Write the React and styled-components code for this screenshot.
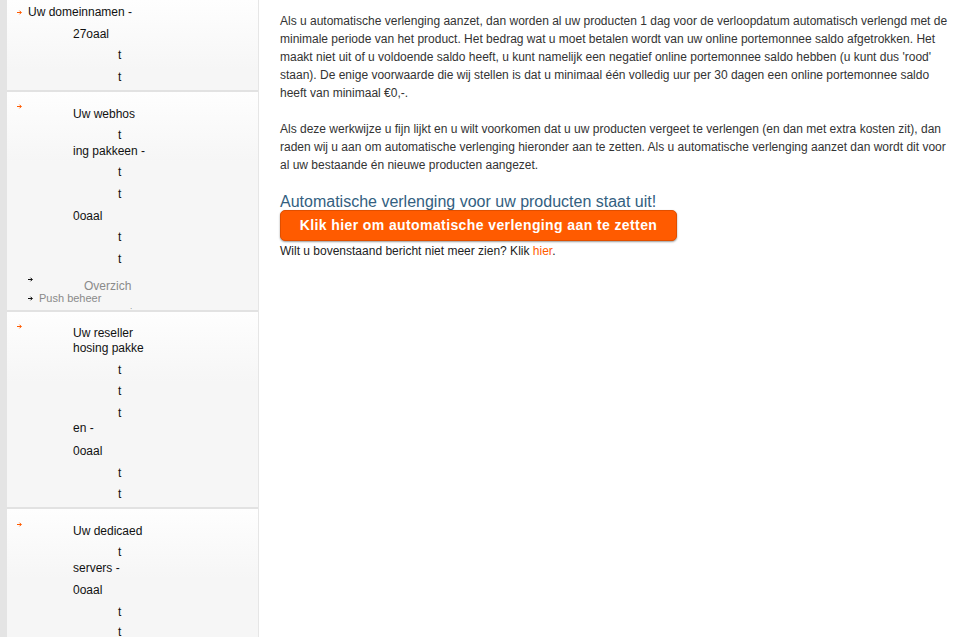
import React from "react";
import styled, { createGlobalStyle } from "styled-components";

const Global = createGlobalStyle`
  html, body { margin: 0; padding: 0; background: #fff; }
  body { font-family: "Liberation Sans", Arial, sans-serif; overflow: hidden; }
`;

const Page = styled.div`
  display: flex;
  height: 100vh;
  overflow: hidden;
`;

const Sidebar = styled.aside`
  flex: 0 0 251px;
  border-left: 7px solid #e4e4e4;
  border-right: 1px solid #e6e6e6;
  background: #f7f7f7;
  display: flex;
  flex-direction: column;
  overflow: hidden;
`;

const Section = styled.section`
  display: grid;
  grid-template-columns: 11px 1fr;
  align-items: start;
  padding: 0 0 ${(p) => p.$pb}px 10px;
  border-bottom: 2px solid #e2e2e2;
  background: linear-gradient(#fefefe, #f6f6f6 70px, #f6f6f6);
  flex: ${(p) => (p.$last ? "1 0 auto" : "0 0 auto")};
`;

const Marker = styled.svg`
  display: block;
  width: 5px;
  height: 5px;
  margin-top: ${(p) => p.$top}px;
`;

const Body = styled.div`
  display: flex;
  flex-direction: column;
`;

const Line = styled.div`
  height: 14px;
  line-height: 14px;
  font-size: 12px;
  color: #111;
  white-space: nowrap;
  margin-top: ${(p) => p.$gap}px;
  margin-left: ${(p) => p.$x - 28}px;
`;

const SubMenu = styled.div`
  display: grid;
  grid-template-columns: 11px 1fr;
  margin-top: ${(p) => p.$gap}px;
`;

const SubArrow = styled.svg`
  display: block;
  width: 5px;
  height: 5px;
  margin-top: ${(p) => p.$top}px;
`;

const SubLink = styled.div`
  font-size: ${(p) => p.$size}px;
  line-height: ${(p) => p.$lh}px;
  color: #8a8a8a;
  white-space: nowrap;
  margin-top: ${(p) => p.$top}px;
  margin-left: ${(p) => p.$x}px;
`;

const Dot = styled.div`
  height: 6px;
  margin-left: 102px;
  font-size: 8px;
  line-height: 6px;
  color: #777;
`;

const Main = styled.main`
  flex: 1 1 auto;
  padding: 12px 8px 0 21px;
  color: #333;
  font-size: 12px;
  line-height: 18px;
`;

const Para = styled.p`
  margin: 0 0 18px;
  &:last-of-type { margin-bottom: 0; }
`;

const Heading = styled.h2`
  margin: 20px 0 0;
  font-size: 16px;
  font-weight: normal;
  line-height: 16px;
  color: #33607f;
`;

const Button = styled.button`
  display: flex;
  align-items: center;
  justify-content: center;
  box-sizing: border-box;
  width: 397px;
  height: 31px;
  margin-top: 0;
  padding: 0 10px 1px;
  border: 1px solid #e04f00;
  border-radius: 5px;
  background: #ff5b00;
  box-shadow: 0 1px 2px rgba(0, 0, 0, 0.4);
  color: #fff;
  font-family: "Liberation Sans", Arial, sans-serif;
  font-weight: bold;
  font-size: 14px;
  letter-spacing: 0.4px;
  cursor: pointer;
`;

const Notice = styled.div`
  margin-top: 1px;
  color: #222;
`;

const Link = styled.a`
  color: #ff5b00;
  text-decoration: none;
`;

const OrangeArrow = ({ top }) => (
  <Marker $top={top} viewBox="0 0 5 5">
    <path d="M0 2.5H4.2M2.5 0.7L4.3 2.5L2.5 4.3" stroke="#ff5b00" strokeWidth="1" fill="none" />
  </Marker>
);

const BlackArrow = ({ top }) => (
  <SubArrow $top={top} viewBox="0 0 5 5">
    <path d="M0 2.5H4.2M2.5 0.7L4.3 2.5L2.5 4.3" stroke="#111" strokeWidth="1" fill="none" />
  </SubArrow>
);

const sections = [
  {
    marker: 10,
    pb: 6,
    lines: [
      ["Uw domeinnamen -", 28, 5],
      ["27oaal", 73, 8],
      ["t", 118, 7],
      ["t", 118, 8],
    ],
  },
  {
    marker: 12,
    pb: 0,
    sub: true,
    lines: [
      ["Uw webhos", 73, 15],
      ["t", 118, 7],
      ["ing pakkeen -", 73, 2],
      ["t", 118, 7],
      ["t", 118, 8],
      ["0oaal", 73, 8],
      ["t", 118, 7],
      ["t", 118, 8],
    ],
  },
  {
    marker: 12,
    pb: 6,
    lines: [
      ["Uw reseller", 73, 14],
      ["hosing pakke", 73, 1],
      ["t", 118, 8],
      ["t", 118, 7],
      ["t", 118, 8],
      ["en -", 73, 1],
      ["0oaal", 73, 9],
      ["t", 118, 8],
      ["t", 118, 7],
    ],
  },
  {
    marker: 13,
    pb: 0,
    last: true,
    lines: [
      ["Uw dedicaed", 73, 15],
      ["t", 118, 7],
      ["servers -", 73, 2],
      ["0oaal", 73, 8],
      ["t", 118, 8],
      ["t", 118, 6],
    ],
  },
];

export default function App() {
  return (
    <>
      <Global />
      <Page>
        <Sidebar>
          {sections.map((s, i) => (
            <Section key={i} $pb={s.pb} $last={s.last}>
              <OrangeArrow top={s.marker} />
              <Body>
                {s.lines.map(([t, x, g], j) => (
                  <Line key={j} $x={x} $gap={g}>
                    {t}
                  </Line>
                ))}
                {s.sub && (
                  <>
                    <SubMenu $gap={9}>
                      <BlackArrow top={2} />
                      <SubLink $size={12} $lh={11} $top={6} $x={45}>
                        Overzich
                      </SubLink>
                      <BlackArrow top={4} />
                      <SubLink $size={11} $lh={12} $top={0} $x={0}>
                        Push beheer
                      </SubLink>
                    </SubMenu>
                    <Dot>.</Dot>
                  </>
                )}
              </Body>
            </Section>
          ))}
        </Sidebar>
        <Main>
          <Para>
            Als u automatische verlenging aanzet, dan worden al uw producten 1 dag voor de verloopdatum automatisch verlengd met de
            minimale periode van het product. Het bedrag wat u moet betalen wordt van uw online portemonnee saldo afgetrokken. Het
            maakt niet uit of u voldoende saldo heeft, u kunt namelijk een negatief online portemonnee saldo hebben (u kunt dus 'rood'
            staan). De enige voorwaarde die wij stellen is dat u minimaal één volledig uur per 30 dagen een online portemonnee saldo
            heeft van minimaal €0,-.
          </Para>
          <Para>
            Als deze werkwijze u fijn lijkt en u wilt voorkomen dat u uw producten vergeet te verlengen (en dan met extra kosten zit), dan
            raden wij u aan om automatische verlenging hieronder aan te zetten. Als u automatische verlenging aanzet dan wordt dit voor
            al uw bestaande én nieuwe producten aangezet.
          </Para>
          <Heading>Automatische verlenging voor uw producten staat uit!</Heading>
          <Button>Klik hier om automatische verlenging aan te zetten</Button>
          <Notice>
            Wilt u bovenstaand bericht niet meer zien? Klik <Link href="#">hier</Link>.
          </Notice>
        </Main>
      </Page>
    </>
  );
}
